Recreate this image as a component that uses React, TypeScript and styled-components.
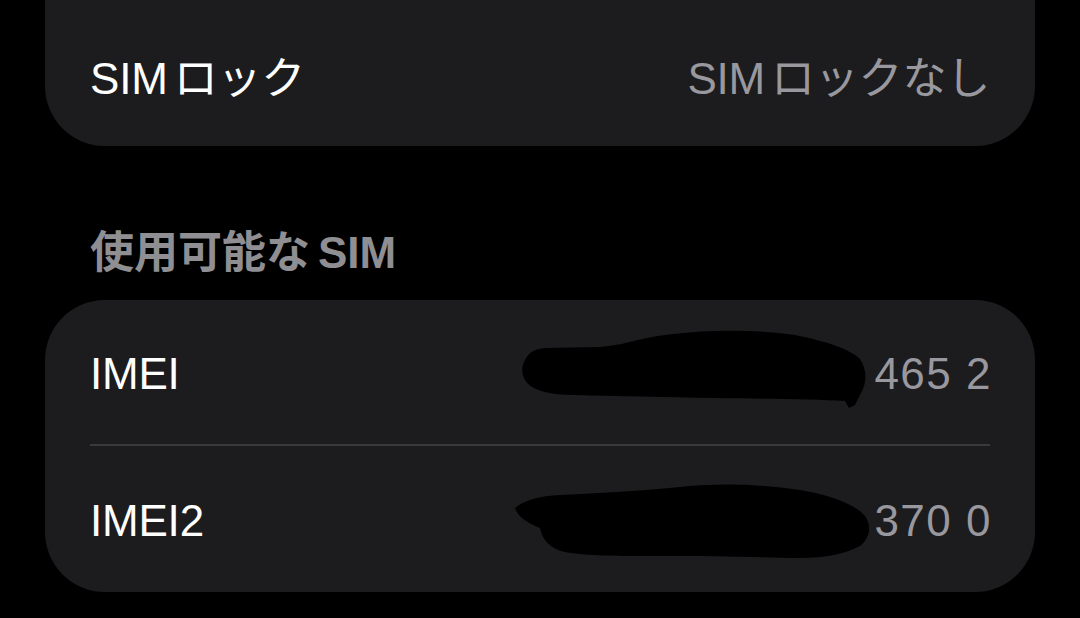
import React, { FC } from "react";
import styled, { createGlobalStyle } from "styled-components";

const GlobalStyle = createGlobalStyle`
  html, body {
    margin: 0;
    padding: 0;
    background: #000;
    overflow: hidden;
  }
  body {
    font-family: "Liberation Sans", "Noto Sans CJK JP", sans-serif;
    -webkit-font-smoothing: antialiased;
  }
`;

const Page = styled.div`
  width: 1080px;
  height: 618px;
  background: #000;
  padding: 0 45px;
  box-sizing: border-box;
  overflow: hidden;
`;

const Card = styled.div<{ $cutTop?: boolean }>`
  background: #1c1c1e;
  border-radius: 60px;
  overflow: hidden;
  margin-top: ${({ $cutTop }) => ($cutTop ? "-80px" : "0")};
  padding-top: ${({ $cutTop }) => ($cutTop ? "80px" : "0")};
`;

const Row = styled.div<{ $divider?: boolean }>`
  position: relative;
  height: 146px;
  margin: 0 45px;
  display: flex;
  align-items: center;
  justify-content: space-between;
  padding-top: 4px;
  box-sizing: border-box;
  border-bottom: ${({ $divider }) => ($divider ? "2px solid #3a3a3d" : "none")};
`;

const Label = styled.span`
  font-size: 44px;
  color: #fff;
  letter-spacing: -0.2px;
`;

const Value = styled.span<{ $spaced?: boolean }>`
  font-size: 44px;
  color: #98989e;
  letter-spacing: ${({ $spaced }) => ($spaced ? "1.5px" : "-0.2px")};
  margin-right: ${({ $spaced }) => ($spaced ? "-2px" : "0")};
`;

/* Latin run before kana: Hiragino leaves a small gap here */
const Latin = styled.span`
  margin-right: 6px;
`;

const SectionHeader = styled.div`
  margin: 81px 45px 21px;
  font-size: 44px;
  line-height: 52px;
  font-weight: 700;
  color: #8e8e93;
`;

const Jp = styled.span`
  margin-right: 8px;
`;

const Redaction = styled.svg`
  position: absolute;
  pointer-events: none;
`;

const ScribbleOne: FC = () => (
  <Redaction width="360" height="90" viewBox="0 0 360 90" style={{ left: 425, top: 25 }}>
    <path
      d="M10 35 C14 26 22 24 30 23 L85 22 C110 20 120 14 150 10 C190 5 240 4 280 10 C310 16 335 24 345 34 C352 44 352 58 346 68 L340 80 L334 83 L330 76 C300 74 260 74 200 73 C150 72 100 71 60 70 C35 70 20 66 12 58 C6 50 6 42 10 35 Z"
      fill="#000"
    />
  </Redaction>
);

const ScribbleTwo: FC = () => (
  <Redaction width="370" height="90" viewBox="0 0 370 90" style={{ left: 420, top: 32 }}>
    <path
      d="M5 30 C14 22 30 18 50 17 C90 15 130 13 170 9 C210 5 250 6 290 12 C320 17 345 26 355 38 C362 48 360 60 350 68 C335 76 315 80 290 80 C250 79 200 78 150 78 C110 78 75 78 55 74 C38 70 32 60 30 50 C20 46 8 40 5 30 Z"
      fill="#000"
    />
  </Redaction>
);

const App: FC = () => (
  <Page>
    <GlobalStyle />
    <Card $cutTop>
      <Row>
        <Label>
          <Latin>SIM</Latin>ロック
        </Label>
        <Value>
          <Latin>SIM</Latin>ロックなし
        </Value>
      </Row>
    </Card>
    <SectionHeader>
      <Jp>使用可能な</Jp>SIM
    </SectionHeader>
    <Card>
      <Row $divider>
        <Label>IMEI</Label>
        <Value $spaced>465 2</Value>
        <ScribbleOne />
      </Row>
      <Row>
        <Label>IMEI2</Label>
        <Value $spaced>370 0</Value>
        <ScribbleTwo />
      </Row>
    </Card>
  </Page>
);

export default App;
